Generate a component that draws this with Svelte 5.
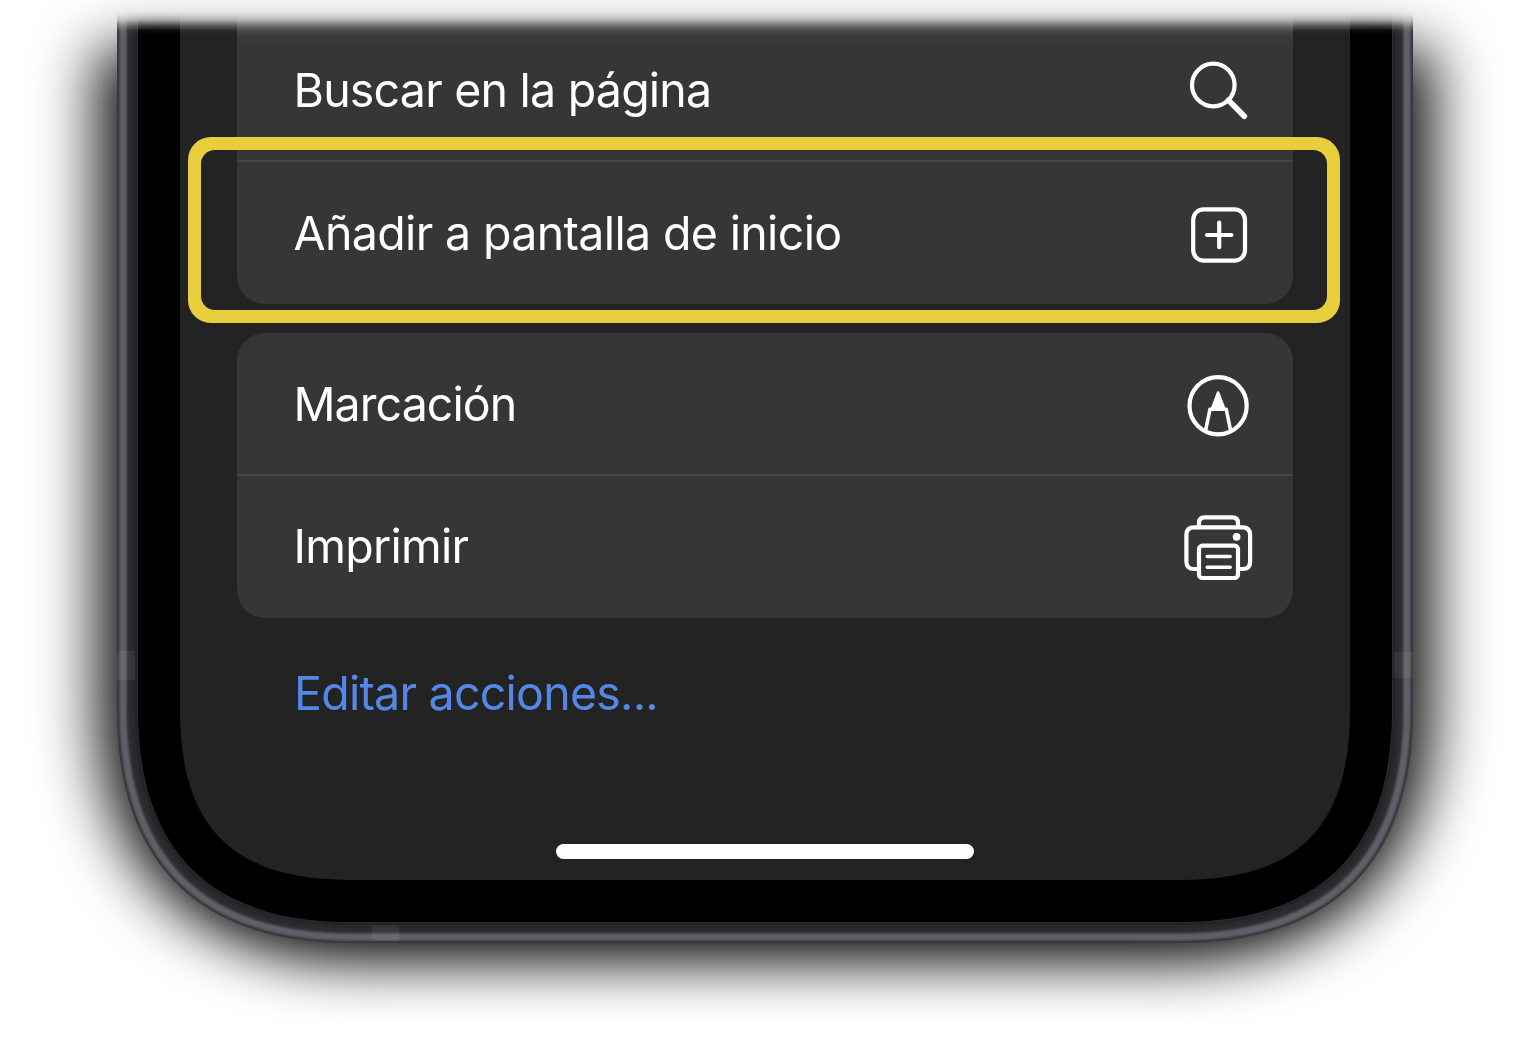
<script>
  // Body outline with smooth bottom corners: `reach` is how far the curve runs
  // along each edge, `cut` how far it stays from the square corner at 45 degrees.
  function bodyPath(left, right, top, bottom, reach, cut) {
    const handle = (4 - (8 * cut) / reach) / 3;
    const h = reach * (1 - handle);
    return [
      `M${left} ${top}H${right}V${bottom - reach}`,
      `C${right} ${bottom - h} ${right - h} ${bottom} ${right - reach} ${bottom}`,
      `H${left + reach}`,
      `C${left + h} ${bottom} ${left} ${bottom - h} ${left} ${bottom - reach}Z`
    ].join('');
  }

  // Metal rim, bezel and display, from the outside in.
  const rings = [
    [0, '#37363b'], [1, '#3c3b41'], [2, '#4b4a51'], [3, '#59585f'], [4, '#605f67'],
    [8, '#59585f'], [9, '#4b4a50'], [10, '#37363c'], [11.5, '#2c2b30'], [15, '#28272c'],
    [18, '#232226'], [20, '#2c2c2f'], [21, '#000000'], [63, '#232323']
  ].map(([inset, color]) => ({
    color,
    d: bodyPath(117 + inset, 1413 - inset, -10, 943 - inset, 233 - inset, 41 + (63 - inset) * 0.293)
  }));

  const shadow = bodyPath(100, 1430, 48, 961, 260, 68);

  const groups = [
    [
      { label: 'Buscar en la página', icon: 'search', fit: 'a' },
      { label: 'Añadir a pantalla de inicio', icon: 'add', fit: 'b' }
    ],
    [
      { label: 'Marcación', icon: 'markup', fit: 'c' },
      { label: 'Imprimir', icon: 'print', fit: 'd' }
    ]
  ];
</script>

<main class="stage">
  <svg class="shadow" viewBox="0 0 1530 1052" aria-hidden="true">
    <defs>
      <filter id="soft" x="-10%" y="-15%" width="120%" height="130%" color-interpolation-filters="sRGB">
        <feGaussianBlur stdDeviation="32 29" />
      </filter>
    </defs>
    <path d={shadow} filter="url(#soft)" />
  </svg>

  <div class="phone">
    <svg class="shell" viewBox="0 0 1530 1052" aria-hidden="true">
      {#each rings as ring}
        <path d={ring.d} fill={ring.color} />
      {/each}
      <g fill="#fff" fill-opacity=".06">
        <rect x="117" y="651" width="18" height="29" />
        <rect x="1394" y="652" width="19" height="26" />
        <rect x="372" y="925" width="27" height="16" />
      </g>
    </svg>

    <div class="sheet">
      {#each groups as group}
        <ul class="card">
          {#each group as item}
            <li class="row">
              <span class="label {item.fit}">{item.label}</span>
              <svg class="icon" viewBox="0 0 80 80" aria-hidden="true">
                {#if item.icon === 'search'}
                  <circle cx="35.3" cy="36" r="21.3" />
                  <path d="M50.5 51.3 66.3 67.3" stroke-width="5.6" />
                {:else if item.icon === 'add'}
                  <rect x="15.2" y="16.3" width="51.8" height="51.4" rx="10.5" />
                  <path d="M41.2 29.7V54.2M29 42H53.4" />
                {:else if item.icon === 'markup'}
                  <circle cx="40.1" cy="41.8" r="28.6" />
                  <path d="M40.1 28.5 46.6 45.5H33.6Z" fill="#fff" stroke-width="2.5" />
                  <path d="M27.6 66.5 32 45.2H48.2L52.6 66.5" stroke-width="3.6" />
                {:else}
                  <path d="M21 19V16Q21 10.4 26.6 10.4H54.4Q60 10.4 60 16V19" />
                  <path d="M20 62H16Q8.4 62 8.4 54.4V28Q8.4 20.4 16 20.4H64.5Q72.1 20.4 72.1 28V54.4Q72.1 62 64.5 62H61" />
                  <rect x="21" y="38.6" width="39" height="32.4" rx="3.5" />
                  <path d="M29.2 49.6H52.2M29.2 60.2H52.2" stroke-width="3.5" />
                  <circle cx="58.6" cy="29.8" r="3.9" fill="#fff" stroke="none" />
                {/if}
              </svg>
            </li>
          {/each}
        </ul>
      {/each}
      <span class="edit label">Editar acciones...</span>
      <div class="home"></div>
    </div>

    <div class="highlight"></div>
  </div>
</main>

<style>
  :global(body) { margin: 0; background: #fff; overflow: hidden; }
  .stage { position: relative; width: 1530px; height: 1052px; overflow: hidden; background: #fff; }
  .shadow, .shell { position: absolute; inset: 0; width: 1530px; height: 1052px; }
  .phone {
    position: relative;
    height: 1052px;
    -webkit-mask-image: linear-gradient(transparent 11px, rgba(0,0,0,.05) 15px, rgba(0,0,0,.22) 20px, rgba(0,0,0,.6) 25px, rgba(0,0,0,.92) 30px, #000 34px);
    mask-image: linear-gradient(transparent 11px, rgba(0,0,0,.05) 15px, rgba(0,0,0,.22) 20px, rgba(0,0,0,.6) 25px, rgba(0,0,0,.92) 30px, #000 34px);
  }
  .sheet {
    position: relative;
    box-sizing: border-box;
    width: 1530px;
    padding: 0 237px;
    display: flex;
    flex-direction: column;
    font-family: Inter, "Liberation Sans", sans-serif;
  }
  .card {
    list-style: none;
    margin: 0 0 29px;
    padding: 0;
    border-radius: 28px;
    background: #363638;
    overflow: hidden;
  }
  .card:first-child {
    padding-top: 18px;
    border-radius: 0 0 28px 28px;
    background: linear-gradient(#464646 28px, #3c3c3d 36px, #363638 48px);
  }
  .row {
    box-sizing: border-box;
    height: 142px;
    padding: 0 35px 0 56.5px;
    display: flex;
    align-items: center;
    justify-content: space-between;
  }
  .card:nth-child(2) .row:first-child { height: 141px; }
  .row + .row { height: 144px; border-top: 2px solid #454547; }
  .label { font-size: 46.5px; line-height: 56px; color: #fff; white-space: nowrap; }
  .a { letter-spacing: -.78px; padding-top: 2px; }
  .b { letter-spacing: -.64px; }
  .c { letter-spacing: -.93px; }
  .d { letter-spacing: -.75px; padding-bottom: 2px; }
  .icon {
    width: 80px;
    height: 80px;
    fill: none;
    stroke: #fff;
    stroke-width: 4.2;
    stroke-linecap: round;
    stroke-linejoin: round;
  }
  .edit { margin: 18px 0 0 57px; color: #5588e6; letter-spacing: -.75px; }
  .home { align-self: center; width: 418px; height: 15px; margin-top: 123px; border-radius: 8px; background: #fff; }
  .highlight {
    position: absolute;
    box-sizing: border-box;
    left: 188px;
    top: 137px;
    width: 1152px;
    height: 186px;
    border: 13px solid #e8cd3d;
    border-radius: 23px;
  }
  .highlight::before {
    content: "";
    position: absolute;
    inset: 0;
    border-radius: 14px;
    box-shadow: 0 0 0 5px #e8cd3d;
  }
</style>
